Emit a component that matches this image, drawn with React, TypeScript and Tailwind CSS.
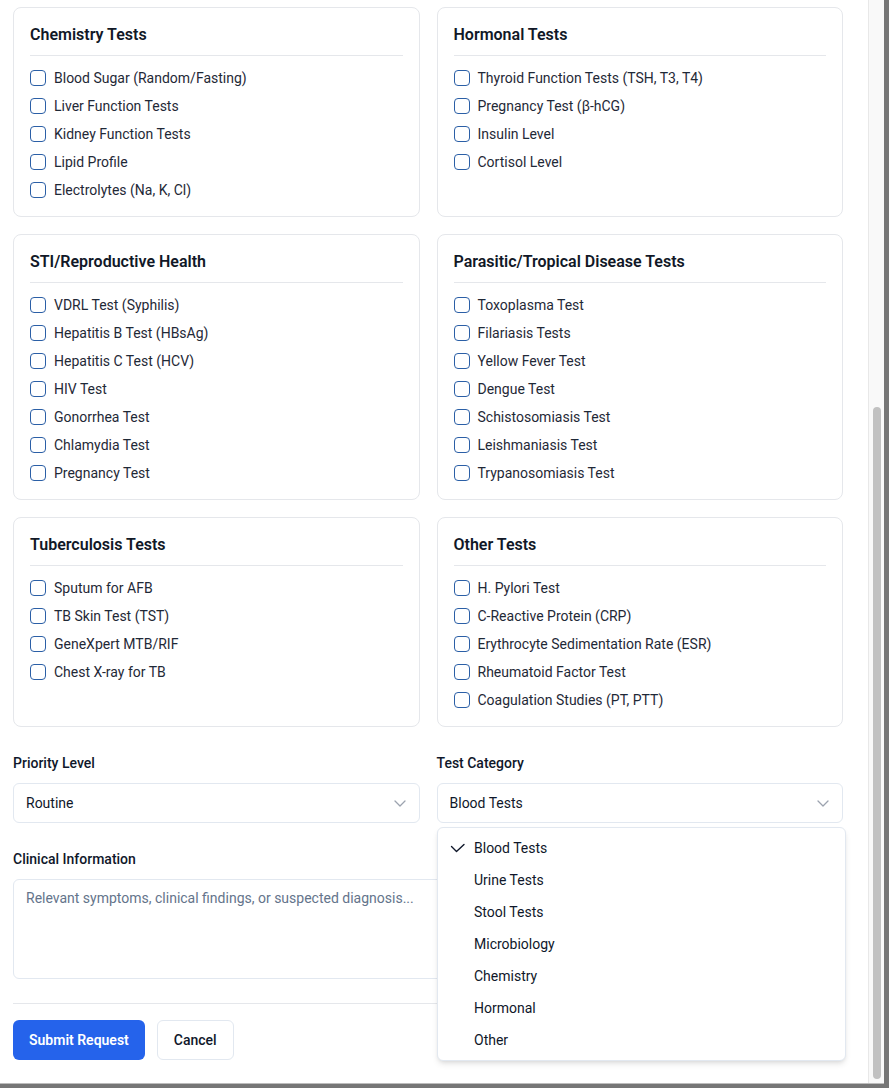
import React from "react";

const sections: { title: string; items: string[] }[] = [
  {
    title: "Chemistry Tests",
    items: [
      "Blood Sugar (Random/Fasting)",
      "Liver Function Tests",
      "Kidney Function Tests",
      "Lipid Profile",
      "Electrolytes (Na, K, Cl)",
    ],
  },
  {
    title: "Hormonal Tests",
    items: [
      "Thyroid Function Tests (TSH, T3, T4)",
      "Pregnancy Test (β-hCG)",
      "Insulin Level",
      "Cortisol Level",
    ],
  },
  {
    title: "STI/Reproductive Health",
    items: [
      "VDRL Test (Syphilis)",
      "Hepatitis B Test (HBsAg)",
      "Hepatitis C Test (HCV)",
      "HIV Test",
      "Gonorrhea Test",
      "Chlamydia Test",
      "Pregnancy Test",
    ],
  },
  {
    title: "Parasitic/Tropical Disease Tests",
    items: [
      "Toxoplasma Test",
      "Filariasis Tests",
      "Yellow Fever Test",
      "Dengue Test",
      "Schistosomiasis Test",
      "Leishmaniasis Test",
      "Trypanosomiasis Test",
    ],
  },
  {
    title: "Tuberculosis Tests",
    items: [
      "Sputum for AFB",
      "TB Skin Test (TST)",
      "GeneXpert MTB/RIF",
      "Chest X-ray for TB",
    ],
  },
  {
    title: "Other Tests",
    items: [
      "H. Pylori Test",
      "C-Reactive Protein (CRP)",
      "Erythrocyte Sedimentation Rate (ESR)",
      "Rheumatoid Factor Test",
      "Coagulation Studies (PT, PTT)",
    ],
  },
];

const categories = [
  "Blood Tests",
  "Urine Tests",
  "Stool Tests",
  "Microbiology",
  "Chemistry",
  "Hormonal",
  "Other",
];

function Chevron() {
  return (
    <svg width="12" height="7" viewBox="0 0 12 7" fill="none" className="shrink-0">
      <polyline points="1,1 6,6 11,1" stroke="#9ca3af" strokeWidth="1.3" strokeLinecap="round" strokeLinejoin="round" />
    </svg>
  );
}

function Card({ title, items }: { title: string; items: string[] }) {
  return (
    <div className="rounded-lg border border-[#e5e7eb] bg-white p-4">
      <h3 className="border-b border-[#e5e7eb] pb-[10px] pt-[1px] text-base font-semibold leading-5 text-[#111827]">
        {title}
      </h3>
      <ul className="mt-3 flex flex-col gap-2">
        {items.map((it) => (
          <li key={it} className="flex h-5 items-center gap-2 text-sm leading-5 text-[#1f2937]">
            <span className="h-4 w-4 shrink-0 rounded-[4px] border border-[#2b5fa6] bg-white" />
            <span>{it}</span>
          </li>
        ))}
      </ul>
    </div>
  );
}

export default function App() {
  return (
    <div
      className="min-h-screen bg-[#767676]"
      style={{ fontFamily: "Roboto, 'Noto Sans', Arial, sans-serif" }}
    >
      <div className="flex h-[1084px] w-[884px] overflow-hidden border-b border-[#bcbcbc] bg-white">
        <div className="relative w-[868px] shrink-0 pl-[13px] pr-[25px] pt-[7px]">
          <div className="grid grid-cols-2 gap-[17px]">
            {sections.map((s) => (
              <Card key={s.title} title={s.title} items={s.items} />
            ))}
          </div>

          <div className="mt-[26px] grid grid-cols-2 gap-[17px]">
            <div>
              <div className="mb-[10px] text-sm font-medium leading-5 text-[#0f172a]">Priority Level</div>
              <div className="flex h-10 items-center justify-between rounded-md border border-[#e2e8f0] bg-white pl-3 pr-[13px] text-sm text-[#0f172a]">
                <span>Routine</span>
                <Chevron />
              </div>
            </div>
            <div>
              <div className="mb-[10px] text-sm font-medium leading-5 text-[#0f172a]">Test Category</div>
              <div className="flex h-10 items-center justify-between rounded-md border border-[#e2e8f0] bg-white pl-3 pr-[13px] text-sm text-[#0f172a]">
                <span>Blood Tests</span>
                <Chevron />
              </div>
            </div>
          </div>

          <div className="mt-[26px]">
            <div className="mb-[10px] text-sm font-medium leading-5 text-[#0f172a]">Clinical Information</div>
            <div className="h-[100px] rounded-md border border-[#e2e8f0] bg-white px-3 py-2 text-sm leading-5 text-[#64748b]">
              Relevant symptoms, clinical findings, or suspected diagnosis...
            </div>
          </div>

          <div className="mt-6 flex gap-3 border-t border-[#e5e7eb] pt-4">
            <button className="h-10 rounded-md bg-[#2563eb] px-4 text-sm font-semibold text-white">
              Submit Request
            </button>
            <button className="h-10 rounded-md border border-[#e2e8f0] bg-white px-4 text-sm font-medium text-[#0f172a]">
              Cancel
            </button>
          </div>

          <div className="absolute left-[437px] top-[827px] w-[409px] rounded-md border border-[#e2e8f0] bg-white p-1 shadow-md">
            {categories.map((c, i) => (
              <div key={c} className="relative flex h-8 items-center pl-8 text-sm text-[#0f172a]">
                {i === 0 && (
                  <svg
                    width="15"
                    height="10"
                    viewBox="0 0 15 10"
                    fill="none"
                    className="absolute left-2 top-[11px]"
                  >
                    <polyline points="1.5,3.5 6.5,8.5 14,1.5" stroke="#0f172a" strokeWidth="1.4" strokeLinecap="round" strokeLinejoin="round" />
                  </svg>
                )}
                {c}
              </div>
            ))}
          </div>
        </div>

        <div className="w-4 shrink-0 border-l border-[#e8e8e8] bg-[#f9f9f9] pt-[407px]">
          <div className="mx-auto h-[672px] w-2 rounded-full bg-[#c1c1c1]" />
        </div>
      </div>
    </div>
  );
}
